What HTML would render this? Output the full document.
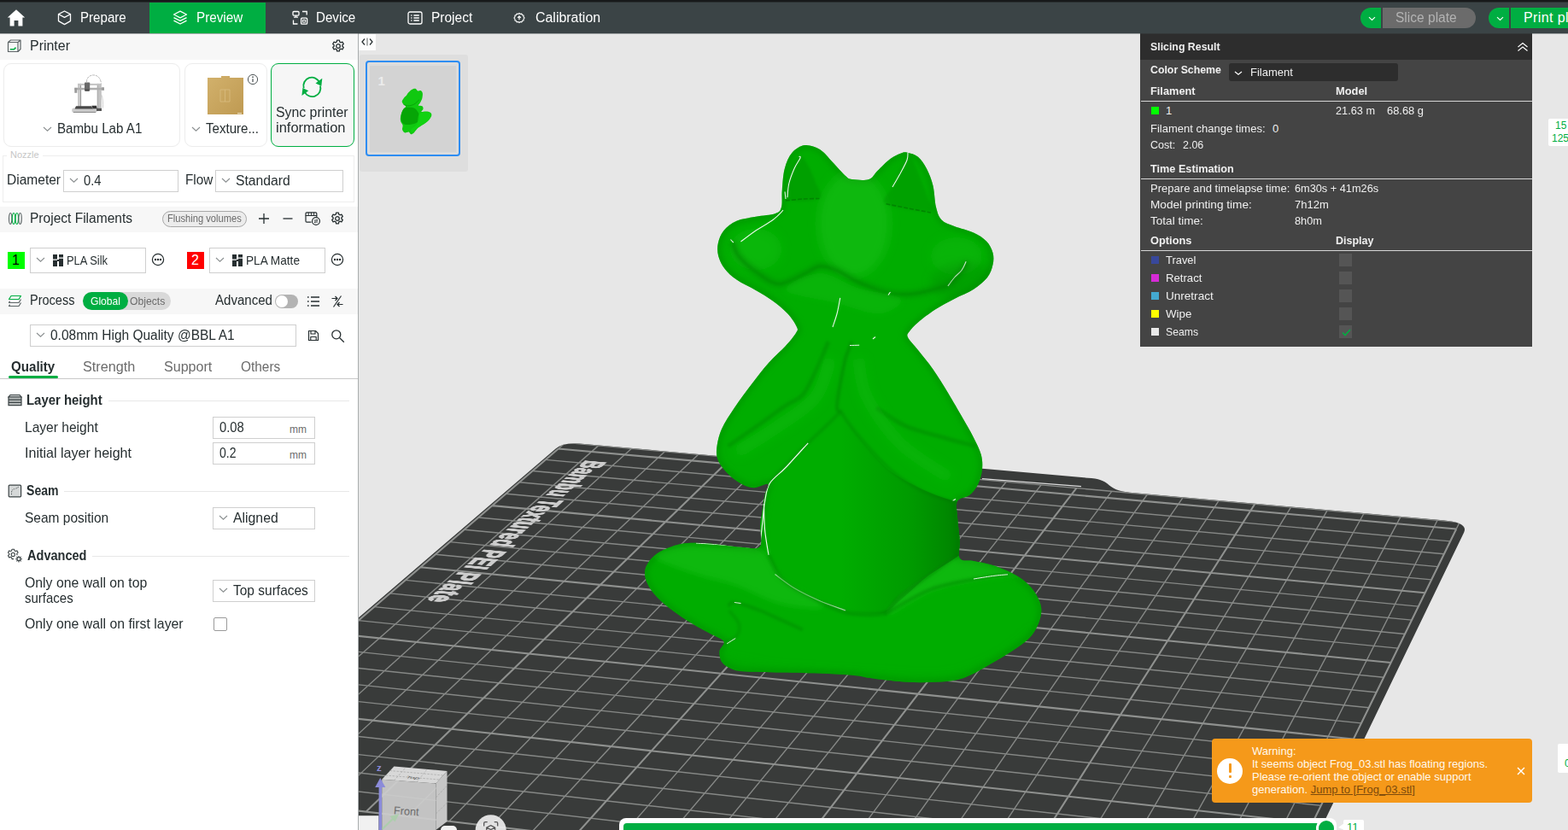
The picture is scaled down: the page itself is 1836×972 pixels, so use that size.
<!DOCTYPE html>
<html><head><meta charset="utf-8"><title>BambuStudio</title>
<style>
*{box-sizing:border-box;margin:0;padding:0}
html,body{width:1836px;height:972px;overflow:hidden;background:#fff}
body{font-family:"Liberation Sans",sans-serif;color:#262e30;position:relative;font-size:16px}
.abs{position:absolute}
.t{position:absolute;white-space:nowrap;line-height:1}
#top{position:absolute;left:0;top:0;width:1836px;height:40px;background:linear-gradient(#3b4446 0,#3b4446 39px,rgba(59,68,70,.4) 39px);z-index:5}
#top .strip{position:absolute;left:0;top:0;width:1836px;height:3px;background:linear-gradient(#17191a 0,#17191a 2px,#2a3031 2px,#2a3031 3px)}
#top .tab{position:absolute;top:3px;height:36px;color:#fff;font-size:16px}
#top .tab span{position:absolute;top:9px;white-space:nowrap;line-height:18px}
#side{position:absolute;left:0;top:39px;width:419px;height:933px;background:#fff}
#sideb{position:absolute;left:419px;top:39px;width:1px;height:933px;background:#a9adae}
.hdr{position:absolute;left:0;width:419px;background:#f7f7f7}
.box{position:absolute;border:1px solid #cfcfcf;background:#fff}
.card{position:absolute;border:1px solid #ececec;border-radius:9px;background:#fff}
#canvas{position:absolute;left:420px;top:39px;width:1416px;height:933px;background:#e7e7e7;overflow:hidden}
.g{color:#6b6b6b}
svg{overflow:visible}
.ic{position:absolute}
#sr{position:absolute;left:1335px;top:39px;width:459px;height:367px;background:#444;color:#f0f0f0;font-size:13px}
#sr .t{color:#efefef}
#sr b{font-weight:bold}
#sr .sep{position:absolute;left:1px;width:458px;height:1px;background:#d6d6d6}
#sr .sq{position:absolute;left:13px;width:9px;height:9px}
#sr .cb{position:absolute;left:233px;width:15px;height:15px;background:#555;margin-top:-1px}
</style></head><body>
<div id="top"><div class="strip"></div>
<svg class="ic" style="left:8px;top:10px" width="22" height="22" viewBox="0 0 22 22"><path d="M11 1.2 L0.8 10.6 L3.6 10.6 L3.6 20.6 L8.6 20.6 L8.6 14 L13.4 14 L13.4 20.6 L18.4 20.6 L18.4 10.6 L21.2 10.6 Z" fill="#fff"></path></svg>
<div class="tab" style="left:48px;width:127px">
<svg class="ic" style="left:19px;top:9px" width="17" height="18" viewBox="0 0 17 18" fill="none" stroke="#fff" stroke-width="1.3" stroke-linejoin="round"><path d="M8.5 1 L15.5 4.6 L15.5 12.6 L8.5 16.6 L1.5 12.6 L1.5 4.6 Z"></path><path d="M1.8 4.8 L8.5 8.4 L15.2 4.8"></path></svg>
<span style="left: 46px; transform-origin: 0px 50%; transform: scaleX(0.944);">Prepare</span></div>
<div class="tab" style="left:175px;width:136px;background:#00ae42">
<svg class="ic" style="left:27px;top:9px" width="18" height="18" viewBox="0 0 18 18" fill="none" stroke="#fff" stroke-width="1.3" stroke-linejoin="round"><path d="M9 1.2 L16.5 5 L9 8.8 L1.5 5 Z"></path><path d="M1.5 8.6 L9 12.4 L16.5 8.6"></path><path d="M1.5 12.2 L9 16 L16.5 12.2"></path></svg>
<span style="left: 55px; transform-origin: 0px 50%; transform: scaleX(0.953);">Preview</span></div>
<div class="tab" style="left:311px;width:130px">
<svg class="ic" style="left:31px;top:9px" width="19" height="18" viewBox="0 0 19 18" fill="none" stroke="#fff" stroke-width="1.3"><rect x="1" y="1.5" width="7" height="4.6" rx="1"></rect><path d="M4.5 6.1 V8.2 M2 8.2 H7"></path><path d="M12 1.5 H17.2 V5.5"></path><path d="M6.5 16 H1.5 V11.5"></path><rect x="10.6" y="9.2" width="7" height="7" rx="1"></rect><rect x="12.6" y="11.4" width="3" height="2.6" stroke-width="1"></rect></svg>
<span style="left: 59px; transform-origin: 0px 50%; transform: scaleX(0.946);">Device</span></div>
<div class="tab" style="left:441px;width:130px">
<svg class="ic" style="left:36px;top:10px" width="18" height="16" viewBox="0 0 18 16" fill="none" stroke="#fff" stroke-width="1.3"><rect x="1" y="1" width="16" height="14" rx="2"></rect><path d="M4.2 5 H5.4 M7.4 5 H13.8 M4.2 8 H5.4 M7.4 8 H13.8 M4.2 11 H5.4 M7.4 11 H13.8"></path></svg>
<span style="left: 64px; transform-origin: 0px 50%; transform: scaleX(0.968);">Project</span></div>
<div class="tab" style="left:571px;width:150px">
<svg class="ic" style="left:30px;top:11px" width="14" height="14" viewBox="0 0 16 16" fill="none" stroke="#fff" stroke-width="1.3"><path d="M8 1.6 l1.4 1.2 1.8-.4 .8 1.7 1.8 .5 -.1 1.9 1.3 1.5 -1.3 1.5 .1 1.9 -1.8 .5 -.8 1.7 -1.8 -.4 L8 14.4 l-1.4 -1.2 -1.8 .4 -.8 -1.7 -1.8 -.5 .1 -1.9 L1 8 l1.3 -1.5 -.1 -1.9 1.8 -.5 .8 -1.7 1.8 .4 Z" stroke-linejoin="round"></path><path d="M8 10.6 V5.8 M5.9 7.8 L8 5.6 L10.1 7.8" stroke-width="1.4"></path></svg>
<span style="left: 56px; transform-origin: 0px 50%; transform: scaleX(0.995);">Calibration</span></div>
<!-- slice / print buttons -->
<div class="abs" style="left:1593px;top:9px;width:24px;height:24px;background:#00ae42;border-radius:12px 0 0 12px"><svg class="ic" style="left:8.5px;top:10px" width="9" height="6" viewBox="0 0 9 6" fill="none" stroke="#fff" stroke-width="1.15"><path d="M1 1.2 L4.5 4.4 L8 1.2"></path></svg></div>
<div class="abs" style="left:1619px;top:9px;width:109px;height:24px;background:#6b6b6b;border-radius:0 12px 12px 0;color:#b3b3b3;font-size:16px"><span class="t" style="left: 15px; top: 4px; transform-origin: 0px 50%; transform: scaleX(0.971);">Slice plate</span></div>
<div class="abs" style="left:1743px;top:9px;width:24px;height:24px;background:#00ae42;border-radius:12px 0 0 12px"><svg class="ic" style="left:8.5px;top:10px" width="9" height="6" viewBox="0 0 9 6" fill="none" stroke="#fff" stroke-width="1.15"><path d="M1 1.2 L4.5 4.4 L8 1.2"></path></svg></div>
<div class="abs" style="left:1769px;top:9px;width:80px;height:24px;background:#00ae42;color:#fff;font-size:16px"><span class="t" style="left:15px;top:4px;letter-spacing:.4px">Print plate</span></div>
</div>
<div id="side"></div><div id="sideb"></div>
<!-- Printer header -->
<div class="hdr" style="top:39px;height:31px"></div>
<svg class="ic" style="left:8px;top:45px" width="18" height="18" viewBox="0 0 18 18" fill="none" stroke="#5c6466" stroke-width="1.2" stroke-linejoin="round"><path d="M1.5 4.5 H13 V15.5 H1.5 Z"></path><path d="M1.5 4.5 L4.5 2 H16 V12.5 L13 15.5 M13 4.5 L16 2"></path><path d="M3.8 12.8 H8.5 L10.5 10.6" stroke="#00ae42" stroke-width="1.6"></path></svg>
<span class="t" style="left: 35px; top: 46px; transform-origin: 0px 50%; transform: scaleX(0.997);">Printer</span>
<svg class="ic" style="left:388px;top:46px" width="16" height="16" viewBox="0 0 16 16" fill="none" stroke="#262e30" stroke-width="1.3" stroke-linejoin="round"><path d="M6.6 1.2 h2.8 l.4 1.9 1.3 .7 1.8 -.7 1.4 2.4 -1.4 1.3 v1.4 l1.4 1.3 -1.4 2.4 -1.8 -.7 -1.3 .7 -.4 1.9 h-2.8 l-.4 -1.9 -1.3 -.7 -1.8 .7 -1.4 -2.4 1.4 -1.3 v-1.4 l-1.4 -1.3 1.4 -2.4 1.8 .7 1.3 -.7 Z"></path><circle cx="8" cy="8" r="2.3"></circle></svg>
<!-- cards -->
<div class="card" style="left:4px;top:74px;width:207px;height:98px"></div>
<div class="card" style="left:216px;top:74px;width:97px;height:98px"></div>
<div class="card" style="left:317px;top:74px;width:98px;height:98px;border:1.4px solid #00ae42;background:#f6f6f6"></div>
<!-- printer illustration -->
<svg class="ic" style="left:82px;top:85px" width="42" height="50" viewBox="0 0 42 50" fill="none">
<path d="M19.500 11 C19 1 35 -1 36.500 12.500" stroke="#9a9a9a" stroke-width=".7" stroke-dasharray="3 .8"></path>
<path d="M36.800 26 C38.500 30 38.800 36 38.400 41.500" stroke="#b0b0b0" stroke-width=".6"></path>
<rect x="9" y="12.900" width="4" height="27.500" fill="#c9c9c9"></rect><rect x="12.200" y="12.900" width=".9" height="27.500" fill="#8e8e8e"></rect>
<rect x="31.800" y="12.900" width="5" height="31.500" fill="#c2c2c2"></rect><rect x="31.800" y="12.900" width=".8" height="31.500" fill="#a2a2a2"></rect>
<rect x="9" y="12.900" width="27.800" height="2" fill="#c4c4c4"></rect>
<rect x="5.300" y="17.800" width="34.600" height="2.500" fill="#aeaeae"></rect><rect x="5.300" y="17.800" width="3" height="6" fill="#9a9a9a"></rect><rect x="37" y="17.300" width="3" height="3.500" fill="#9c9c9c"></rect>
<rect x="17" y="11.500" width="6.200" height="10" rx=".8" fill="#6a6a6a"></rect><rect x="17.500" y="19.500" width="5" height="2.200" fill="#4a4a4a"></rect>
<rect x="2.200" y="41.600" width="29.500" height="5.300" rx="2.200" fill="#cbcbcb"></rect><rect x="4" y="45.900" width="26" height="1.100" fill="#8c8c8c"></rect>
<path d="M7 39.300 H25 L27 42.600 H5.500 Z" fill="#474747"></path>
<path d="M25.300 38.800 H31 L31.600 42.200 H26.800 Z" fill="#333"></path>
<rect x="31" y="41.800" width="6" height="3.200" fill="#555"></rect>
</svg>
<svg class="ic" style="left:50px;top:148px" width="11" height="7" viewBox="0 0 11 7" fill="none" stroke="#8a8f90" stroke-width="1.1"><path d="M1 1 L5.5 5.2 L10 1"></path></svg>
<span class="t" style="left: 67px; top: 143px; transform-origin: 0px 50%; transform: scaleX(0.946);">Bambu Lab A1</span>
<!-- plate image -->
<svg class="ic" style="left:242px;top:88px" width="44" height="48" viewBox="0 0 44 48"><defs><linearGradient id="gold" x1="0" y1="0" x2="1" y2="1"><stop offset="0" stop-color="#d2b16c"></stop><stop offset="1" stop-color="#bf9a52"></stop></linearGradient></defs><path d="M1 3 H17 V1 H27 V3 H43 V46 H1 Z" fill="url(#gold)"></path><path d="M16 17 H27 V31 H16 Z M21.5 17 V31" fill="none" stroke="#d9bd80" stroke-width=".8"></path><rect x="36" y="44.3" width="5" height="1" fill="#f3ead2"></rect></svg>
<svg class="ic" style="left:289px;top:86px" width="14" height="14" viewBox="0 0 14 14" fill="none" stroke="#4f5658" stroke-width="1"><circle cx="7" cy="7" r="5.6"></circle><path d="M7 6.2 V10" stroke-width="1.3"></path><circle cx="7" cy="4.2" r=".5" fill="#4f5658"></circle></svg>
<svg class="ic" style="left:224px;top:148px" width="11" height="7" viewBox="0 0 11 7" fill="none" stroke="#8a8f90" stroke-width="1.1"><path d="M1 1 L5.5 5.2 L10 1"></path></svg>
<span class="t" style="left: 241px; top: 143px; transform-origin: 0px 50%; transform: scaleX(0.942);">Texture...</span>
<!-- sync -->
<svg class="ic" style="left:350px;top:88px" width="32" height="28" viewBox="0 0 32 28" fill="none" stroke="#00ae42" stroke-width="1.9"><path d="M5.7 15.2 A9.8 9.8 0 0 1 24.2 8.8"></path><path d="M25 12.600 A9.8 9.800 0 0 1 6.5 19"></path><path d="M19.500 9.500 L27.300 3.800 L26.300 12.700 Z" fill="#00ae42" stroke="none"></path><path d="M11.200 18.300 L3.400 24 L4.400 15.100 Z" fill="#00ae42" stroke="none"></path></svg>
<span class="t" style="left: 323px; top: 124px; transform-origin: 0px 50%; transform: scaleX(0.99);">Sync printer</span>
<span class="t" style="left: 323px; top: 142px; transform-origin: 0px 50%; transform: scaleX(1.03);">information</span>
<!-- nozzle -->
<div class="abs" style="left:3px;top:182px;width:412px;height:55px;border:1px solid #eeeeee"></div>
<span class="t" style="left:8px;top:176px;font-size:11px;color:#c6c6c6;background:#fff;padding:0 4px">Nozzle</span>
<span class="t" style="left: 8px; top: 203px; transform-origin: 0px 50%; transform: scaleX(0.971);">Diameter</span>
<div class="box" style="left:74px;top:199px;width:135px;height:26px"></div>
<svg class="ic" style="left:81px;top:208px" width="11" height="7" viewBox="0 0 11 7" fill="none" stroke="#8a8f90" stroke-width="1.1"><path d="M1 1 L5.5 5.2 L10 1"></path></svg>
<span class="t" style="left: 98px; top: 204px; transform-origin: 0px 50%; transform: scaleX(0.921);">0.4</span>
<span class="t" style="left: 217px; top: 203px; transform-origin: 0px 50%; transform: scaleX(0.955);">Flow</span>
<div class="box" style="left:252px;top:199px;width:150px;height:26px"></div>
<svg class="ic" style="left:259px;top:208px" width="11" height="7" viewBox="0 0 11 7" fill="none" stroke="#8a8f90" stroke-width="1.1"><path d="M1 1 L5.5 5.2 L10 1"></path></svg>
<span class="t" style="left: 276px; top: 204px; transform-origin: 0px 50%; transform: scaleX(0.982);">Standard</span>
<!-- Project Filaments -->
<div class="hdr" style="top:242px;height:30px"></div>
<svg class="ic" style="left:9px;top:248px" width="18" height="16" viewBox="0 0 18 16" fill="none" stroke-width="1.1"><ellipse cx="3.2" cy="8" rx="1.7" ry="6.5" stroke="#5c6466"></ellipse><ellipse cx="7" cy="8" rx="1.7" ry="6.5" stroke="#00ae42"></ellipse><ellipse cx="10.8" cy="8" rx="1.7" ry="6.5" stroke="#00ae42"></ellipse><ellipse cx="14.6" cy="8" rx="1.7" ry="6.5" stroke="#5c6466"></ellipse></svg>
<span class="t" style="left: 35px; top: 248px; transform-origin: 0px 50%; transform: scaleX(0.971);">Project Filaments</span>
<div class="abs" style="left:190px;top:247px;width:99px;height:19px;border:1px solid #a8a8a8;border-radius:10px;background:#ececec"></div>
<span class="t g" style="left: 196px; top: 250px; font-size: 12px; transform-origin: 0px 50%; transform: scaleX(0.929);">Flushing volumes</span>
<svg class="ic" style="left:302px;top:249px" width="14" height="14" viewBox="0 0 14 14" stroke="#262e30" stroke-width="1.3"><path d="M7 1 V13 M1 7 H13"></path></svg>
<svg class="ic" style="left:330px;top:249px" width="14" height="14" viewBox="0 0 14 14" stroke="#262e30" stroke-width="1.3"><path d="M1.5 7 H12.5"></path></svg>
<svg class="ic" style="left:356px;top:247px" width="20" height="18" viewBox="0 0 20 18" fill="none" stroke="#262e30" stroke-width="1.2"><path d="M2 5.5 V3 Q2 1.8 3.2 1.8 H13.6 Q14.8 1.8 14.8 3 V5.5 Z"></path><path d="M5.2 2 V5.3 M8.4 2 V5.3 M11.6 2 V5.3" stroke-width="1"></path><path d="M2 5.5 V12 Q2 13.2 3.2 13.2 H8.5 M14.8 5.5 V7"></path><circle cx="14" cy="12" r="4.4" fill="#fff"></circle><path d="M11.8 11 H16 M14.8 9.8 L16 11 M16.2 13 H12 M13.2 14.2 L12 13" stroke-width="1"></path></svg>
<svg class="ic" style="left:387px;top:248px" width="16" height="16" viewBox="0 0 16 16" fill="none" stroke="#262e30" stroke-width="1.3" stroke-linejoin="round"><path d="M6.6 1.2 h2.8 l.4 1.9 1.3 .7 1.8 -.7 1.4 2.4 -1.4 1.3 v1.4 l1.4 1.3 -1.4 2.4 -1.8 -.7 -1.3 .7 -.4 1.9 h-2.8 l-.4 -1.9 -1.3 -.7 -1.8 .7 -1.4 -2.4 1.4 -1.3 v-1.4 l-1.4 -1.3 1.4 -2.4 1.8 .7 1.3 -.7 Z"></path><circle cx="8" cy="8" r="2.3"></circle></svg>
<!-- filament row -->
<div class="abs" style="left:9px;top:295px;width:20px;height:20px;background:#00ff00"></div>
<span class="t" style="left:14px;top:297px;color:#000">1</span>
<div class="box" style="left:35px;top:290px;width:136px;height:30px"></div>
<svg class="ic" style="left:42px;top:301px" width="11" height="7" viewBox="0 0 11 7" fill="none" stroke="#8a8f90" stroke-width="1.1"><path d="M1 1 L5.5 5.2 L10 1"></path></svg>
<svg class="ic" style="left:62px;top:298px" width="12" height="14" viewBox="0 0 12 14" fill="#262e30"><path d="M0 0 H5 V5.5 H0 Z M7 0 H12 V3.5 H7 Z M7 4.8 H12 V14 H7 Z M0 6.8 H5 V14 H0 Z M5 6 H7 V8 H5Z"></path></svg>
<span class="t" style="left: 78px; top: 296.5px; font-size: 15px; transform-origin: 0px 50%; transform: scaleX(0.86);">PLA Silk</span>
<svg class="ic" style="left:177px;top:296px" width="16" height="16" viewBox="0 0 16 16" fill="none" stroke="#262e30" stroke-width="1.2"><circle cx="8" cy="8" r="6.6"></circle><circle cx="5" cy="8" r=".6" fill="#262e30"></circle><circle cx="8" cy="8" r=".6" fill="#262e30"></circle><circle cx="11" cy="8" r=".6" fill="#262e30"></circle></svg>
<div class="abs" style="left:219px;top:295px;width:20px;height:20px;background:#ff0000"></div>
<span class="t" style="left:224px;top:297px;color:#fff">2</span>
<div class="box" style="left:245px;top:290px;width:136px;height:30px"></div>
<svg class="ic" style="left:252px;top:301px" width="11" height="7" viewBox="0 0 11 7" fill="none" stroke="#8a8f90" stroke-width="1.1"><path d="M1 1 L5.5 5.2 L10 1"></path></svg>
<svg class="ic" style="left:272px;top:298px" width="12" height="14" viewBox="0 0 12 14" fill="#262e30"><path d="M0 0 H5 V5.5 H0 Z M7 0 H12 V3.5 H7 Z M7 4.8 H12 V14 H7 Z M0 6.8 H5 V14 H0 Z M5 6 H7 V8 H5Z"></path></svg>
<span class="t" style="left: 288px; top: 296.5px; font-size: 15px; transform-origin: 0px 50%; transform: scaleX(0.91);">PLA Matte</span>
<svg class="ic" style="left:387px;top:296px" width="16" height="16" viewBox="0 0 16 16" fill="none" stroke="#262e30" stroke-width="1.2"><circle cx="8" cy="8" r="6.6"></circle><circle cx="5" cy="8" r=".6" fill="#262e30"></circle><circle cx="8" cy="8" r=".6" fill="#262e30"></circle><circle cx="11" cy="8" r=".6" fill="#262e30"></circle></svg>
<!-- Process -->
<div class="hdr" style="top:338px;height:30px"></div>
<svg class="ic" style="left:9px;top:345px" width="17" height="16" viewBox="0 0 17 16" fill="none" stroke-width="1.2" stroke-linejoin="round"><path d="M4 1.5 H15.5 L13 5.5 H1.5 Z" stroke="#00ae42"></path><path d="M15.5 5.5 L13 9.5 H1.5 L2.6 7.6" stroke="#5c6466"></path><path d="M15.5 9.5 L13 13.5 H1.5 L2.6 11.6" stroke="#5c6466"></path></svg>
<span class="t" style="left: 35px; top: 344px; transform-origin: 0px 50%; transform: scaleX(0.908);">Process</span>
<div class="abs" style="left:97px;top:342px;width:103px;height:21px;border-radius:11px;background:#d9d9d9"></div>
<div class="abs" style="left:97px;top:342px;width:53px;height:21px;border-radius:11px;background:#00ae42"></div>
<span class="t" style="left: 106px; top: 346px; font-size: 13px; color: rgb(255, 255, 255); transform-origin: 0px 50%; transform: scaleX(0.931);">Global</span>
<span class="t" style="left: 152px; top: 346px; font-size: 13px; color: rgb(107, 107, 107); transform-origin: 0px 50%; transform: scaleX(0.936);">Objects</span>
<span class="t" style="left: 252px; top: 344px; transform-origin: 0px 50%; transform: scaleX(0.941);">Advanced</span>
<div class="abs" style="left:322px;top:345px;width:27px;height:16px;border-radius:8px;background:#b3b3b3"></div>
<div class="abs" style="left:323px;top:346px;width:14px;height:14px;border-radius:7px;background:#fff"></div>
<svg class="ic" style="left:359px;top:346px" width="16" height="14" viewBox="0 0 16 14" stroke="#262e30" stroke-width="1.3"><path d="M1 2 H2.6 M5 2 H15 M1 7 H2.6 M5 7 H15 M1 12 H2.6 M5 12 H15"></path></svg>
<svg class="ic" style="left:387px;top:345px" width="16" height="16" viewBox="0 0 16 16" fill="none" stroke="#262e30" stroke-width="1.2"><path d="M1.5 4.5 H8 M5.5 2 L8 4.5 L5.5 7"></path><path d="M12.5 1.5 L3.5 14.5"></path><path d="M14.5 11.5 H8 M10.5 9 L8 11.5 L10.5 14"></path></svg>
<div class="box" style="left:35px;top:380px;width:312px;height:26px"></div>
<svg class="ic" style="left:42px;top:389px" width="11" height="7" viewBox="0 0 11 7" fill="none" stroke="#8a8f90" stroke-width="1.1"><path d="M1 1 L5.5 5.2 L10 1"></path></svg>
<span class="t" style="left: 59px; top: 385px; transform-origin: 0px 50%; transform: scaleX(0.968);">0.08mm High Quality @BBL A1</span>
<svg class="ic" style="left:360px;top:386px" width="14" height="14" viewBox="0 0 14 14" fill="none" stroke="#262e30" stroke-width="1.2" stroke-linejoin="round"><path d="M1.5 1.5 H9.5 L12.5 4.5 V12.5 H1.5 Z"></path><path d="M4 1.8 V5 H9 V1.8 M3.8 12.3 V8.5 H10.2 V12.3"></path></svg>
<svg class="ic" style="left:387px;top:385px" width="17" height="17" viewBox="0 0 17 17" fill="none" stroke="#262e30" stroke-width="1.3"><circle cx="6.8" cy="6.8" r="5"></circle><path d="M10.5 10.5 L15.8 15.8"></path></svg>
<!-- tabs -->
<span class="t" style="left: 13px; top: 421.5px; font-weight: bold; transform-origin: 0px 50%; transform: scaleX(0.945);">Quality</span>
<span class="t" style="left: 97px; top: 421.5px; color: rgb(107, 107, 107); transform-origin: 0px 50%; transform: scaleX(1.013);">Strength</span>
<span class="t" style="left: 192px; top: 421.5px; color: rgb(107, 107, 107); transform-origin: 0px 50%; transform: scaleX(1.004);">Support</span>
<span class="t" style="left: 282px; top: 421.5px; color: rgb(107, 107, 107); transform-origin: 0px 50%; transform: scaleX(0.963);">Others</span>
<div class="abs" style="left:0;top:443px;width:419px;height:1px;background:#c8c8c8"></div>
<div class="abs" style="left:10px;top:440px;width:58px;height:3px;border-radius:2px;background:#00ae42"></div>
<!-- Quality page -->
<svg class="ic" style="left:9px;top:461px" width="17" height="16" viewBox="0 0 17 16" fill="none" stroke="#3c4446" stroke-width="1.2"><path d="M3 1.5 H14 L16 4 H1 Z" fill="#d5d8d8"></path><path d="M1 4 H16 V7.2 H1 Z M1 7.2 H16 V10.4 H1 Z M1 10.4 H16 V13.6 H1 Z" fill="#b9bdbd"></path></svg>
<span class="t" style="left: 31px; top: 461px; font-weight: bold; font-size: 15.7px; transform-origin: 0px 50%; transform: scaleX(0.951);">Layer height</span>
<div class="abs" style="left:127px;top:469px;width:282px;height:1px;background:#e8e8e8"></div>
<span class="t" style="left: 29px; top: 493px; font-size: 15.7px; transform-origin: 0px 50%; transform: scaleX(0.993);">Layer height</span>
<div class="box" style="left:249px;top:488px;width:120px;height:26px"></div>
<span class="t" style="left: 257px; top: 493px; font-size: 15.7px; transform-origin: 0px 50%; transform: scaleX(0.941);">0.08</span>
<span class="t g" style="left: 339px; top: 497px; font-size: 12px; transform-origin: 0px 50%; transform: scaleX(1);">mm</span>
<span class="t" style="left: 29px; top: 523px; font-size: 15.7px; transform-origin: 0px 50%; transform: scaleX(1.024);">Initial layer height</span>
<div class="box" style="left:249px;top:518px;width:120px;height:26px"></div>
<span class="t" style="left: 257px; top: 523px; font-size: 15.7px; transform-origin: 0px 50%; transform: scaleX(0.894);">0.2</span>
<span class="t g" style="left: 339px; top: 527px; font-size: 12px; transform-origin: 0px 50%; transform: scaleX(1);">mm</span>

<svg class="ic" style="left:9px;top:567px" width="17" height="16" viewBox="0 0 17 16" fill="none" stroke="#3c4446" stroke-width="1.2"><rect x="1.2" y="1.2" width="14.4" height="13.6" rx="1" fill="#d5d8d8"></rect><path d="M4.5 12 V11 M4.5 9.5 Q5 6 8 5.6 M9.5 5.2 L12.5 3.5" stroke-width="1" stroke-dasharray="1.2 1.2"></path></svg>
<span class="t" style="left: 31px; top: 567px; font-weight: bold; font-size: 15.7px; transform-origin: 0px 50%; transform: scaleX(0.896);">Seam</span>
<div class="abs" style="left:75px;top:575px;width:334px;height:1px;background:#e8e8e8"></div>
<span class="t" style="left: 29px; top: 599px; font-size: 15.7px; transform-origin: 0px 50%; transform: scaleX(0.988);">Seam position</span>
<div class="box" style="left:249px;top:594px;width:120px;height:26px"></div>
<svg class="ic" style="left:256px;top:603px" width="11" height="7" viewBox="0 0 11 7" fill="none" stroke="#8a8f90" stroke-width="1.1"><path d="M1 1 L5.5 5.2 L10 1"></path></svg>
<span class="t" style="left: 273px; top: 599px; font-size: 15.7px; transform-origin: 0px 50%; transform: scaleX(1.008);">Aligned</span>

<svg class="ic" style="left:8px;top:642px" width="20" height="18" viewBox="0 0 20 18" fill="none" stroke="#3c4446" stroke-width="1.1" stroke-linejoin="round"><path d="M6 1.2 h2.6 l.4 1.7 1.2 .6 1.6 -.6 1.3 2.2 -1.3 1.2 v1.2 l.6 .6 M6 1.2 l-.4 1.7 -1.2 .6 -1.6 -.6 -1.3 2.2 1.3 1.2 v1.2 l-1.3 1.2 1.3 2.2 1.6 -.6 1.2 .6 .4 1.7 h2"></path><circle cx="7.3" cy="7.4" r="2.1"></circle><circle cx="14" cy="12.6" r="2"></circle><path d="M14 9 v1.4 M14 14.8 v1.6 M10.4 12.6 h1.5 M16.2 12.6 h1.6 M11.5 10 l1 1 M15.6 14.2 l1.1 1.1 M16.6 10 l-1 1 M12.5 14.2 l-1.1 1.1"></path></svg>
<span class="t" style="left: 32px; top: 643px; font-weight: bold; font-size: 15.7px; transform-origin: 0px 50%; transform: scaleX(0.927);">Advanced</span>
<div class="abs" style="left:108px;top:651px;width:301px;height:1px;background:#e8e8e8"></div>
<span class="t" style="left: 29px; top: 675px; font-size: 15.7px; transform-origin: 0px 50%; transform: scaleX(1.008);">Only one wall on top</span>
<span class="t" style="left: 29px; top: 693px; font-size: 15.7px; transform-origin: 0px 50%; transform: scaleX(0.955);">surfaces</span>
<div class="box" style="left:249px;top:679px;width:120px;height:26px"></div>
<svg class="ic" style="left:256px;top:688px" width="11" height="7" viewBox="0 0 11 7" fill="none" stroke="#8a8f90" stroke-width="1.1"><path d="M1 1 L5.5 5.2 L10 1"></path></svg>
<span class="t" style="left: 273px; top: 684px; font-size: 15.7px; transform-origin: 0px 50%; transform: scaleX(0.988);">Top surfaces</span>
<span class="t" style="left: 29px; top: 723px; font-size: 15.7px; transform-origin: 0px 50%; transform: scaleX(1.009);">Only one wall on first layer</span>
<div class="abs" style="left:250px;top:723px;width:16px;height:16px;border:1px solid #9a9a9a;border-radius:2px;background:#fff"></div>
<div id="canvas">
<svg id="scene" width="1416" height="932" viewBox="420 40 1416 932" style="position:absolute;left:0;top:1px">
<defs>
<clipPath id="pc"><path d="M187.3 922.7 L650.6 525.4 Q659.5 517.8 678.7 519.5 L1056.7 553.1 L1079.2 542.6 L1278 560.1 C1302.7 562.3 1293.8 574.1 1322.9 576.7 L1689.3 609.3 Q1719.7 612 1714.2 623.4 L1496.5 1074.2 L420 1200Z"></path></clipPath>
<clipPath id="fc"><path d="M942.5 170C947.9 169.4 954.6 171.7 960 175C965.4 178.3 970 184.8 975 190C980 195.2 986.2 202.7 990 206C993.8 209.3 992.9 209.3 997.5 210C1002.1 210.7 1012.5 211.7 1017.5 210C1022.5 208.3 1023.3 204 1027.5 200C1031.7 196 1037.9 189.4 1042.5 186C1047.1 182.6 1051.7 180.7 1055 179.5C1058.3 178.3 1059.2 178 1062.5 178.8C1065.8 179.5 1071.2 180.6 1075 183.8C1078.8 186.9 1082.1 191.9 1085 197.5C1087.9 203.1 1090.7 210 1092.5 217.5C1094.3 225 1094.3 235.8 1096 242.5C1097.7 249.2 1098.9 253.8 1102.5 257.5C1106.1 261.2 1111.2 262.5 1117.5 265C1123.8 267.5 1133.8 269.6 1140 272.5C1146.2 275.4 1151.2 278.6 1155 282.5C1158.8 286.4 1161.2 291.4 1162.5 296C1163.8 300.6 1163.6 305.2 1162.5 310C1161.4 314.8 1159.8 320.2 1156 325C1152.2 329.8 1146.4 334.6 1140 338.8C1133.6 342.9 1125 346 1117.5 350C1110 354 1102.1 357.9 1095 362.5C1087.9 367.1 1080 373.2 1075 377.5C1070 381.8 1067 385.1 1065 388C1063 390.9 1061.3 391.3 1063 395C1064.7 398.7 1070.1 403.8 1075 410C1079.9 416.2 1086.7 424.2 1092.5 432.5C1098.3 440.8 1104.2 450.4 1110 460C1115.8 469.6 1122.5 481.2 1127.5 490C1132.5 498.8 1136.5 505.4 1140 512.5C1143.5 519.6 1147.1 526.2 1148.8 532.5C1150.4 538.8 1150.6 544.2 1150 550C1149.4 555.8 1147.5 562.5 1145 567.5C1142.5 572.5 1139 576.8 1135 580C1131 583.2 1123.3 582.4 1121 587C1118.7 591.6 1120.8 599.8 1121.2 607.5C1121.7 615.2 1123.3 625.2 1123.8 633C1124.2 640.8 1121.3 650 1124 654C1126.7 658 1134 655.8 1140 657C1146 658.2 1153.3 659.3 1160 661.2C1166.7 663.2 1173.8 665.8 1180 668.8C1186.2 671.7 1192.5 675 1197.5 678.8C1202.5 682.5 1206.7 686.9 1210 691.2C1213.3 695.6 1216 700.6 1217.5 705C1219 709.4 1219.7 712.9 1219.2 717.5C1218.8 722.1 1217.4 727.5 1215 732.5C1212.6 737.5 1210 742.5 1205 747.5C1200 752.5 1192.5 757.5 1185 762.5C1177.5 767.5 1167.9 772.9 1160 777.5C1152.1 782.1 1144.2 786.9 1137.5 790C1130.8 793.1 1127.1 794.8 1120 796.2C1112.9 797.7 1104.6 798.3 1095 798.8C1085.4 799.2 1074.2 799.4 1062.5 798.8C1050.8 798.1 1035.4 796.3 1025 795C1014.6 793.7 1010 792 1000 791C990 790 979.2 789.3 965 788.8C950.8 788.2 930.8 787.9 915 787.5C899.2 787.1 880 787.1 870 786.2C860 785.4 859.2 784.4 855 782.5C850.8 780.6 847.1 778.3 845 775C842.9 771.7 842.1 766.5 842.5 762.5C842.9 758.5 849.2 754.6 847.5 751.2C845.8 747.9 838.8 746 832.5 742.5C826.2 739 817.5 734.6 810 730C802.5 725.4 794.2 720 787.5 715C780.8 710 774.8 705 770 700C765.2 695 761.2 690 758.8 685C756.2 680 754.8 674.6 755 670C755.2 665.4 757.1 661.5 760 657.5C762.9 653.5 766.7 649.6 772.5 646.2C778.3 642.9 787.9 639.2 795 637.5C802.1 635.8 807.5 635.8 815 635.8C822.5 635.8 830.8 636.6 840 637.5C849.2 638.4 861.7 640.6 870 641C878.3 641.4 886.7 644.3 890 640C893.3 635.7 889.7 621.2 890 615C890.3 608.8 891.1 608.3 892 602.5C892.9 596.7 894.3 585.9 895.5 580C896.7 574.1 901.2 568.5 899 567C896.8 565.5 887.8 571.4 882.5 571.2C877.2 571.1 872.5 569 867.5 566.2C862.5 563.5 856.9 559.4 852.5 555C848.1 550.6 843.5 545 841.2 540C839 535 838.6 531.2 839.2 525C839.9 518.8 841.5 510.4 845 502.5C848.5 494.6 854.2 486.2 860 477.5C865.8 468.8 873.3 458.8 880 450C886.7 441.2 893.3 432.5 900 425C906.7 417.5 914.7 410.8 920 405C925.3 399.2 929.8 393.7 932 390C934.2 386.3 934.6 386.8 933 383C931.4 379.2 927.2 372.6 922.5 367.5C917.8 362.4 911.2 357.1 905 352.5C898.8 347.9 892.1 344.2 885 340C877.9 335.8 868.5 331.7 862.5 327.5C856.5 323.3 852.3 319.6 848.8 315C845.2 310.4 842.6 305 841.2 300C839.9 295 839.7 290 840.8 285C841.8 280 843.9 274.4 847.5 270C851.1 265.6 856.2 261.5 862.5 258.8C868.8 256 877.4 255.2 885 253.8C892.6 252.3 903 251.9 908 250C913 248.1 913.7 247.1 915 242.5C916.3 237.9 915.1 230 915.8 222.5C916.4 215 916.8 204.8 918.8 197.5C920.7 190.2 923.5 183.3 927.5 178.8C931.5 174.2 937.1 170.6 942.5 170Z"></path></clipPath>
<linearGradient id="tg" gradientUnits="userSpaceOnUse" x1="985" y1="0" x2="1128" y2="0"><stop offset="0" stop-color="#006e00" stop-opacity="0"></stop><stop offset=".55" stop-color="#006e00" stop-opacity=".28"></stop><stop offset="1" stop-color="#006000" stop-opacity=".6"></stop></linearGradient>
<filter id="b6" x="-20%" y="-20%" width="140%" height="140%"><feGaussianBlur stdDeviation="6"></feGaussianBlur></filter>
<filter id="b2" x="-20%" y="-20%" width="140%" height="140%"><feGaussianBlur stdDeviation="1.6"></feGaussianBlur></filter>
<filter id="b3" x="-20%" y="-20%" width="140%" height="140%"><feGaussianBlur stdDeviation="3"></feGaussianBlur></filter>
</defs>
<path d="M187.3 922.7 L650.6 525.4 Q659.5 517.8 678.7 519.5 L1056.7 553.1 L1079.2 542.6 L1278 560.1 C1302.7 562.3 1293.8 574.1 1322.9 576.7 L1689.3 609.3 Q1719.7 612 1714.2 623.4 L1496.5 1074.2 L420 1200Z" fill="#393b3a"></path>
<g clip-path="url(#pc)" fill="none" stroke="#8f918f">
<path d="M662.1 518.4L653.8 525.5M700.7 521.9L238.1 928.6M739.5 525.3L285.3 934.1M778.5 528.8L332.8 939.5M817.7 532.2L380.6 945.1M896.5 539.3L477 956.2M936.2 542.8L525.6 961.9M976.1 546.3L574.5 967.5M1016.1 549.9L623.7 973.2M1096.8 557.1L722.9 984.7M1137.4 560.7L772.9 990.5M1178.2 564.3L823.2 996.3M1219.2 567.9L873.9 1002.1M1301.8 575.3L976 1014M1343.4 579L1027.5 1019.9M1385.1 582.7L1079.3 1025.9M1427.1 586.4L1131.5 1031.9M1511.6 593.9L1236.7 1044.1M1554.2 597.7L1289.7 1050.3M1596.9 601.5L1343.1 1056.4M1639.9 605.3L1396.9 1062.6M1683.1 609.2L1450.9 1068.9M1709.1 611.5L1705.2 619.5M662.1 518.4L1709.1 611.5M638.8 538.4L1698.1 633.9M623.6 551.5L1690.9 648.7M608.1 564.8L1683.6 663.6M592.4 578.3L1676.1 678.9M560.1 606L1660.8 710.1M543.6 620.2L1653 726.1M526.8 634.6L1645 742.5M509.8 649.3L1636.9 759.1M474.7 679.4L1620.2 793.2M456.7 694.9L1611.6 810.8M438.4 710.6L1602.8 828.7M419.8 726.6L1593.9 846.9M381.6 759.4L1575.6 884.4M362 776.3L1566.1 903.7M342 793.5L1556.5 923.4M321.6 811L1546.7 943.4M279.7 847L1526.5 984.8M258.2 865.5L1516.1 1006.1M236.3 884.3L1505.4 1027.8M213.9 903.5L1494.6 1050" stroke-width="1.4" stroke-opacity=".9"></path>
<path d="M653.8 525.5L191.1 923.1M857 535.7L428.7 950.6M1056.4 553.5L673.1 978.9M1260.4 571.6L924.8 1008M1469.3 590.2L1183.9 1038M1705.2 619.5L1483.5 1072.7M653.8 525.5L1705.2 619.5M576.4 592.1L1668.5 694.3M492.4 664.2L1628.6 776M400.9 742.9L1584.8 865.5M300.9 828.8L1536.7 963.9M191.1 923.1L1483.5 1072.7" stroke-width="2.1"></path>
</g>
<path d="M1150 560.7 L1266 569.7" stroke="#dcdcdc" stroke-width="1.3"></path>
<path d="M942.5 170C947.9 169.4 954.6 171.7 960 175C965.4 178.3 970 184.8 975 190C980 195.2 986.2 202.7 990 206C993.8 209.3 992.9 209.3 997.5 210C1002.1 210.7 1012.5 211.7 1017.5 210C1022.5 208.3 1023.3 204 1027.5 200C1031.7 196 1037.9 189.4 1042.5 186C1047.1 182.6 1051.7 180.7 1055 179.5C1058.3 178.3 1059.2 178 1062.5 178.8C1065.8 179.5 1071.2 180.6 1075 183.8C1078.8 186.9 1082.1 191.9 1085 197.5C1087.9 203.1 1090.7 210 1092.5 217.5C1094.3 225 1094.3 235.8 1096 242.5C1097.7 249.2 1098.9 253.8 1102.5 257.5C1106.1 261.2 1111.2 262.5 1117.5 265C1123.8 267.5 1133.8 269.6 1140 272.5C1146.2 275.4 1151.2 278.6 1155 282.5C1158.8 286.4 1161.2 291.4 1162.5 296C1163.8 300.6 1163.6 305.2 1162.5 310C1161.4 314.8 1159.8 320.2 1156 325C1152.2 329.8 1146.4 334.6 1140 338.8C1133.6 342.9 1125 346 1117.5 350C1110 354 1102.1 357.9 1095 362.5C1087.9 367.1 1080 373.2 1075 377.5C1070 381.8 1067 385.1 1065 388C1063 390.9 1061.3 391.3 1063 395C1064.7 398.7 1070.1 403.8 1075 410C1079.9 416.2 1086.7 424.2 1092.5 432.5C1098.3 440.8 1104.2 450.4 1110 460C1115.8 469.6 1122.5 481.2 1127.5 490C1132.5 498.8 1136.5 505.4 1140 512.5C1143.5 519.6 1147.1 526.2 1148.8 532.5C1150.4 538.8 1150.6 544.2 1150 550C1149.4 555.8 1147.5 562.5 1145 567.5C1142.5 572.5 1139 576.8 1135 580C1131 583.2 1123.3 582.4 1121 587C1118.7 591.6 1120.8 599.8 1121.2 607.5C1121.7 615.2 1123.3 625.2 1123.8 633C1124.2 640.8 1121.3 650 1124 654C1126.7 658 1134 655.8 1140 657C1146 658.2 1153.3 659.3 1160 661.2C1166.7 663.2 1173.8 665.8 1180 668.8C1186.2 671.7 1192.5 675 1197.5 678.8C1202.5 682.5 1206.7 686.9 1210 691.2C1213.3 695.6 1216 700.6 1217.5 705C1219 709.4 1219.7 712.9 1219.2 717.5C1218.8 722.1 1217.4 727.5 1215 732.5C1212.6 737.5 1210 742.5 1205 747.5C1200 752.5 1192.5 757.5 1185 762.5C1177.5 767.5 1167.9 772.9 1160 777.5C1152.1 782.1 1144.2 786.9 1137.5 790C1130.8 793.1 1127.1 794.8 1120 796.2C1112.9 797.7 1104.6 798.3 1095 798.8C1085.4 799.2 1074.2 799.4 1062.5 798.8C1050.8 798.1 1035.4 796.3 1025 795C1014.6 793.7 1010 792 1000 791C990 790 979.2 789.3 965 788.8C950.8 788.2 930.8 787.9 915 787.5C899.2 787.1 880 787.1 870 786.2C860 785.4 859.2 784.4 855 782.5C850.8 780.6 847.1 778.3 845 775C842.9 771.7 842.1 766.5 842.5 762.5C842.9 758.5 849.2 754.6 847.5 751.2C845.8 747.9 838.8 746 832.5 742.5C826.2 739 817.5 734.6 810 730C802.5 725.4 794.2 720 787.5 715C780.8 710 774.8 705 770 700C765.2 695 761.2 690 758.8 685C756.2 680 754.8 674.6 755 670C755.2 665.4 757.1 661.5 760 657.5C762.9 653.5 766.7 649.6 772.5 646.2C778.3 642.9 787.9 639.2 795 637.5C802.1 635.8 807.5 635.8 815 635.8C822.5 635.8 830.8 636.6 840 637.5C849.2 638.4 861.7 640.6 870 641C878.3 641.4 886.7 644.3 890 640C893.3 635.7 889.7 621.2 890 615C890.3 608.8 891.1 608.3 892 602.5C892.9 596.7 894.3 585.9 895.5 580C896.7 574.1 901.2 568.5 899 567C896.8 565.5 887.8 571.4 882.5 571.2C877.2 571.1 872.5 569 867.5 566.2C862.5 563.5 856.9 559.4 852.5 555C848.1 550.6 843.5 545 841.2 540C839 535 838.6 531.2 839.2 525C839.9 518.8 841.5 510.4 845 502.5C848.5 494.6 854.2 486.2 860 477.5C865.8 468.8 873.3 458.8 880 450C886.7 441.2 893.3 432.5 900 425C906.7 417.5 914.7 410.8 920 405C925.3 399.2 929.8 393.7 932 390C934.2 386.3 934.6 386.8 933 383C931.4 379.2 927.2 372.6 922.5 367.5C917.8 362.4 911.2 357.1 905 352.5C898.8 347.9 892.1 344.2 885 340C877.9 335.8 868.5 331.7 862.5 327.5C856.5 323.3 852.3 319.6 848.8 315C845.2 310.4 842.6 305 841.2 300C839.9 295 839.7 290 840.8 285C841.8 280 843.9 274.4 847.5 270C851.1 265.6 856.2 261.5 862.5 258.8C868.8 256 877.4 255.2 885 253.8C892.6 252.3 903 251.9 908 250C913 248.1 913.7 247.1 915 242.5C916.3 237.9 915.1 230 915.8 222.5C916.4 215 916.8 204.8 918.8 197.5C920.7 190.2 923.5 183.3 927.5 178.8C931.5 174.2 937.1 170.6 942.5 170Z" fill="#00ad00"></path>
<g clip-path="url(#fc)" id="shade"><path d="M942.5 170C947.9 169.4 954.6 171.7 960 175C965.4 178.3 970 184.8 975 190C980 195.2 986.2 202.7 990 206C993.8 209.3 992.9 209.3 997.5 210C1002.1 210.7 1012.5 211.7 1017.5 210C1022.5 208.3 1023.3 204 1027.5 200C1031.7 196 1037.9 189.4 1042.5 186C1047.1 182.6 1051.7 180.7 1055 179.5C1058.3 178.3 1059.2 178 1062.5 178.8C1065.8 179.5 1071.2 180.6 1075 183.8C1078.8 186.9 1082.1 191.9 1085 197.5C1087.9 203.1 1090.7 210 1092.5 217.5C1094.3 225 1094.3 235.8 1096 242.5C1097.7 249.2 1098.9 253.8 1102.5 257.5C1106.1 261.2 1111.2 262.5 1117.5 265C1123.8 267.5 1133.8 269.6 1140 272.5C1146.2 275.4 1151.2 278.6 1155 282.5C1158.8 286.4 1161.2 291.4 1162.5 296C1163.8 300.6 1163.6 305.2 1162.5 310C1161.4 314.8 1159.8 320.2 1156 325C1152.2 329.8 1146.4 334.6 1140 338.8C1133.6 342.9 1125 346 1117.5 350C1110 354 1102.1 357.9 1095 362.5C1087.9 367.1 1080 373.2 1075 377.5C1070 381.8 1067 385.1 1065 388C1063 390.9 1061.3 391.3 1063 395C1064.7 398.7 1070.1 403.8 1075 410C1079.9 416.2 1086.7 424.2 1092.5 432.5C1098.3 440.8 1104.2 450.4 1110 460C1115.8 469.6 1122.5 481.2 1127.5 490C1132.5 498.8 1136.5 505.4 1140 512.5C1143.5 519.6 1147.1 526.2 1148.8 532.5C1150.4 538.8 1150.6 544.2 1150 550C1149.4 555.8 1147.5 562.5 1145 567.5C1142.5 572.5 1139 576.8 1135 580C1131 583.2 1123.3 582.4 1121 587C1118.7 591.6 1120.8 599.8 1121.2 607.5C1121.7 615.2 1123.3 625.2 1123.8 633C1124.2 640.8 1121.3 650 1124 654C1126.7 658 1134 655.8 1140 657C1146 658.2 1153.3 659.3 1160 661.2C1166.7 663.2 1173.8 665.8 1180 668.8C1186.2 671.7 1192.5 675 1197.5 678.8C1202.5 682.5 1206.7 686.9 1210 691.2C1213.3 695.6 1216 700.6 1217.5 705C1219 709.4 1219.7 712.9 1219.2 717.5C1218.8 722.1 1217.4 727.5 1215 732.5C1212.6 737.5 1210 742.5 1205 747.5C1200 752.5 1192.5 757.5 1185 762.5C1177.5 767.5 1167.9 772.9 1160 777.5C1152.1 782.1 1144.2 786.9 1137.5 790C1130.8 793.1 1127.1 794.8 1120 796.2C1112.9 797.7 1104.6 798.3 1095 798.8C1085.4 799.2 1074.2 799.4 1062.5 798.8C1050.8 798.1 1035.4 796.3 1025 795C1014.6 793.7 1010 792 1000 791C990 790 979.2 789.3 965 788.8C950.8 788.2 930.8 787.9 915 787.5C899.2 787.1 880 787.1 870 786.2C860 785.4 859.2 784.4 855 782.5C850.8 780.6 847.1 778.3 845 775C842.9 771.7 842.1 766.5 842.5 762.5C842.9 758.5 849.2 754.6 847.5 751.2C845.8 747.9 838.8 746 832.5 742.5C826.2 739 817.5 734.6 810 730C802.5 725.4 794.2 720 787.5 715C780.8 710 774.8 705 770 700C765.2 695 761.2 690 758.8 685C756.2 680 754.8 674.6 755 670C755.2 665.4 757.1 661.5 760 657.5C762.9 653.5 766.7 649.6 772.5 646.2C778.3 642.9 787.9 639.2 795 637.5C802.1 635.8 807.5 635.8 815 635.8C822.5 635.8 830.8 636.6 840 637.5C849.2 638.4 861.7 640.6 870 641C878.3 641.4 886.7 644.3 890 640C893.3 635.7 889.7 621.2 890 615C890.3 608.8 891.1 608.3 892 602.5C892.9 596.7 894.3 585.9 895.5 580C896.7 574.1 901.2 568.5 899 567C896.8 565.5 887.8 571.4 882.5 571.2C877.2 571.1 872.5 569 867.5 566.2C862.5 563.5 856.9 559.4 852.5 555C848.1 550.6 843.5 545 841.2 540C839 535 838.6 531.2 839.2 525C839.9 518.8 841.5 510.4 845 502.5C848.5 494.6 854.2 486.2 860 477.5C865.8 468.8 873.3 458.8 880 450C886.7 441.2 893.3 432.5 900 425C906.7 417.5 914.7 410.8 920 405C925.3 399.2 929.8 393.7 932 390C934.2 386.3 934.6 386.8 933 383C931.4 379.2 927.2 372.6 922.5 367.5C917.8 362.4 911.2 357.1 905 352.5C898.8 347.9 892.1 344.2 885 340C877.9 335.8 868.5 331.7 862.5 327.5C856.5 323.3 852.3 319.6 848.8 315C845.2 310.4 842.6 305 841.2 300C839.9 295 839.7 290 840.8 285C841.8 280 843.9 274.4 847.5 270C851.1 265.6 856.2 261.5 862.5 258.8C868.8 256 877.4 255.2 885 253.8C892.6 252.3 903 251.9 908 250C913 248.1 913.7 247.1 915 242.5C916.3 237.9 915.1 230 915.8 222.5C916.4 215 916.8 204.8 918.8 197.5C920.7 190.2 923.5 183.3 927.5 178.8C931.5 174.2 937.1 170.6 942.5 170Z" fill="none" stroke="#008f00" stroke-width="9" stroke-opacity=".55" filter="url(#b3)"></path><ellipse cx="1000" cy="262" rx="42" ry="62" fill="#2fd02f" fill-opacity=".32" filter="url(#b6)"></ellipse><ellipse cx="885" cy="292" rx="30" ry="24" fill="#22c822" fill-opacity=".35" filter="url(#b6)"></ellipse><ellipse cx="1120" cy="300" rx="30" ry="22" fill="#22c822" fill-opacity=".25" filter="url(#b6)"></ellipse><path d="M920 233.8C913.6 230.4 919.8 219.6 921.2 212.5C922.7 205.4 926 196.2 928.8 191.2C931.5 186.3 934.6 182.6 937.5 183C940.4 183.4 943.3 188.6 946.2 193.8C949.2 198.9 952.8 207.3 955 213.8C957.2 220.2 965.3 229.2 959.5 232.5C953.7 235.8 926.4 237.1 920 233.8Z" fill="#009600" fill-opacity=".55" filter="url(#b2)"></path><path d="M1037.5 238.8C1030.1 233.9 1042.1 226 1045 218.8C1047.9 211.5 1051.9 201.5 1055 195C1058.1 188.5 1060.2 178.3 1063.8 180C1067.3 181.7 1072.5 196.5 1076.2 205C1080 213.5 1084 224.1 1086.2 231.2C1088.5 238.4 1097.6 246.8 1089.5 248C1081.4 249.2 1044.9 243.6 1037.5 238.8Z" fill="#009600" fill-opacity=".5" filter="url(#b2)"></path><path d="M920 235C923.3 234.7 933.4 233.4 940 233C946.6 232.6 956.2 232.6 959.5 232.5" fill="none" stroke="#007e00" stroke-width="1.6" stroke-opacity=".8" stroke-dasharray="5 2"></path><path d="M1037.5 238.8C1041.7 239.6 1053.8 242 1062.5 243.8C1071.2 245.5 1085.4 248.1 1090 249" fill="none" stroke="#007e00" stroke-width="1.6" stroke-opacity=".8" stroke-dasharray="5 2"></path><path d="M857.5 282.5C858.8 285.4 860 293.8 865 300C870 306.2 879.6 314.6 887.5 320C895.4 325.4 903.3 332.4 912.5 332.5C921.7 332.6 934.6 324 942.5 320.5C950.4 317 953.8 312.4 960 311.8C966.2 311.1 972.5 313.6 980 316.8C987.5 319.9 995 326.1 1005 330.5C1015 334.9 1029.6 340.7 1040 343C1050.4 345.3 1058.8 344.9 1067.5 344.2C1076.2 343.6 1085 341 1092.5 339C1100 337 1106.7 336.4 1112.5 332.5C1118.3 328.6 1124.2 319.9 1127.5 315.5C1130.8 311.1 1131.7 307.8 1132.5 306.2" fill="none" stroke="#008600" stroke-width="7" stroke-opacity=".55" filter="url(#b3)"></path><path d="M857.5 282.5C858.8 285.4 860 293.8 865 300C870 306.2 879.6 314.6 887.5 320C895.4 325.4 903.3 332.4 912.5 332.5C921.7 332.6 934.6 324 942.5 320.5C950.4 317 953.8 312.4 960 311.8C966.2 311.1 972.5 313.6 980 316.8C987.5 319.9 995 326.1 1005 330.5C1015 334.9 1029.6 340.7 1040 343C1050.4 345.3 1058.8 344.9 1067.5 344.2C1076.2 343.6 1085 341 1092.5 339C1100 337 1106.7 336.4 1112.5 332.5C1118.3 328.6 1124.2 319.9 1127.5 315.5C1130.8 311.1 1131.7 307.8 1132.5 306.2" fill="none" stroke="#007c00" stroke-width="2" stroke-opacity=".45" filter="url(#b2)"></path><path d="M920 340C916.7 334.2 945.8 320.4 960 320C974.2 319.6 989.2 332.5 1005 337.5C1020.8 342.5 1050.8 345 1055 350C1059.2 355 1042.5 366.7 1030 367.5C1017.5 368.3 998.3 359.6 980 355C961.7 350.4 923.3 345.8 920 340Z" fill="#1fc41f" fill-opacity=".3" filter="url(#b3)"></path><path d="M935.5 183.2C935.8 183.5 937.9 182.6 937 185C936.1 187.4 932.2 192.5 930 197.5C927.8 202.5 925.1 209.4 923.8 215C922.4 220.6 922.3 228.5 922 231.2" fill="none" stroke="#e9f7e9" stroke-width="1.1"></path><path d="M919 224.5C919.2 225.9 919.8 231.6 920 233" fill="none" stroke="#e9f7e9" stroke-width="1.1"></path><path d="M1063 179C1062.8 180.4 1063.5 183.4 1062 187.5C1060.5 191.6 1056.6 198.5 1053.8 203.8C1050.9 209 1046.5 216.5 1045 219" fill="none" stroke="#e9f7e9" stroke-width="1.1"></path><path d="M917 246.2C915 248.1 910.3 253.5 905 257.5C899.7 261.5 891.2 265.8 885 270C878.8 274.2 870.4 280.8 867.5 283" fill="none" stroke="#e9f7e9" stroke-width="1.1"></path><path d="M855.5 280.5C856 281.1 858.2 283.4 858.8 284" fill="none" stroke="#e9f7e9" stroke-width="1.1"></path><path d="M1131.2 306.2C1130.4 307.9 1128.5 313.1 1126.2 316.2C1124 319.4 1120.2 321.9 1117.5 325C1114.8 328.1 1111.2 333.3 1110 335" fill="none" stroke="#e9f7e9" stroke-width="1.1"></path><path d="M1040 345.5C1040.4 344.9 1042.1 342.6 1042.5 342" fill="none" stroke="#e9f7e9" stroke-width="1.1"></path><path d="M983.8 348.8C983.1 351.9 981.5 361.8 980 367.5C978.5 373.2 975.8 380.4 975 383" fill="none" stroke="#e9f7e9" stroke-width="1.1"></path><path d="M1022 397C1022.5 396.6 1024.5 394.9 1025 394.5" fill="none" stroke="#e9f7e9" stroke-width="1.1"></path><path d="M852.5 522.5C857.9 518.8 873.8 507.9 885 500C896.2 492.1 910.8 481.2 920 475C929.2 468.8 934.2 469.2 940 462.5C945.8 455.8 950 445.4 955 435C960 424.6 967.5 405.8 970 400" fill="none" stroke="#008a00" stroke-width="5" stroke-opacity=".5" filter="url(#b2)"></path><path d="M1026.2 477.5C1031.9 481 1046.9 492.9 1060 498.8C1073.1 504.6 1091.2 508.5 1105 512.5C1118.8 516.5 1136.2 520.8 1142.5 522.5" fill="none" stroke="#008a00" stroke-width="5" stroke-opacity=".5" filter="url(#b2)"></path><path d="M997.5 400C996.2 403.3 992.3 411.7 990 420C987.7 428.3 985.4 440.4 983.8 450C982.1 459.6 979.8 472 980 477.5C980.2 483 984.2 482.1 985 483" fill="none" stroke="#008a00" stroke-width="4" stroke-opacity=".6" filter="url(#b2)"></path><path d="M985 483C988.3 487.5 995.4 498.8 1005 510C1014.6 521.2 1030 539.2 1042.5 550C1055 560.8 1067.9 568.8 1080 575C1092.1 581.2 1109.2 585 1115 587" fill="none" stroke="#008a00" stroke-width="4" stroke-opacity=".45" filter="url(#b2)"></path><path d="M985 481.2C982.5 483.8 976.7 489.8 970 496.2C963.3 502.7 953.3 511.8 945 520C936.7 528.2 927.5 537.9 920 545.5C912.5 553.1 903.3 562.2 900 565.5" fill="none" stroke="#008a00" stroke-width="4" stroke-opacity=".45" filter="url(#b2)"></path><path d="M862.5 530C870.4 525 894.6 510.8 910 500C925.4 489.2 944.6 478.3 955 465C965.4 451.7 969.6 427.5 972.5 420" fill="none" stroke="#25cc25" stroke-width="14" stroke-opacity=".28" filter="url(#b6)"></path><path d="M1005 420C1006.7 427.5 1006.7 448.3 1015 465C1023.3 481.7 1038.8 504.2 1055 520C1071.2 535.8 1102.9 553.3 1112.5 560" fill="none" stroke="#25cc25" stroke-width="14" stroke-opacity=".25" filter="url(#b6)"></path><path d="M946.2 518.8C941.9 523.5 927.5 539.6 920 547.5C912.5 555.4 905.3 559.6 901.2 566.2C897.2 572.9 896.9 580.2 895.5 587.5C894.1 594.8 893.8 602.4 893 610C892.2 617.6 890.9 629.2 890.5 633" fill="none" stroke="#e9f7e9" stroke-width="1.2"></path><path d="M1115.5 586.5C1116.1 586.2 1118.4 584.8 1119 584.5" fill="none" stroke="#e9f7e9" stroke-width="1.1"></path><path d="M995 404.5C996.9 404.5 1004.4 404.3 1006.2 404.2" fill="none" stroke="#e9f7e9" stroke-width="1"></path><path d="M894.5 590C894.7 595 894.6 610 895.5 620C896.4 630 899.2 645 900 650" fill="none" stroke="#e9f7e9" stroke-width="1.2"></path><path d="M907.5 672.5C911.2 675.2 921.2 683.5 930 688.8C938.8 694 950 699.4 960 703.8C970 708.1 985 713.1 990 715" fill="none" stroke="#e9f7e9" stroke-width="1.1"></path><path d="M900 650C902.5 654.6 908.3 670 915 677.5C921.7 685 929.6 689.2 940 695C950.4 700.8 967.5 708.5 977.5 712.5C987.5 716.5 990.4 717.8 1000 718.8C1009.6 719.7 1026.2 721.1 1035 718C1043.8 714.9 1043.3 707.6 1052.5 700C1061.7 692.4 1078.3 680.8 1090 672.5C1101.7 664.2 1117.1 653.8 1122.5 650" fill="none" stroke="#008a00" stroke-width="5" stroke-opacity=".55" filter="url(#b2)"></path><path d="M767.5 652.5C764.6 646.9 784.6 640.8 797.5 638.8C810.4 636.7 829.6 639.2 845 640C860.4 640.8 878.3 637.5 890 643.8C901.7 650 902.5 666.5 915 677.5C927.5 688.5 965 705 965 710C965 715 932.5 711.7 915 707.5C897.5 703.3 876.7 690.8 860 685C843.3 679.2 830.4 677.9 815 672.5C799.6 667.1 770.4 658.1 767.5 652.5Z" fill="#2ad02a" fill-opacity=".3" filter="url(#b3)"></path><path d="M1052.5 700C1060.8 692.1 1078.3 680.4 1090 672.5C1101.7 664.6 1110 654.2 1122.5 652.5C1135 650.8 1152.2 658.3 1165 662.5C1177.8 666.7 1196.5 675.4 1199 677.5C1201.5 679.6 1189.8 674.6 1180 675C1170.2 675.4 1155 677.1 1140 680C1125 682.9 1106.7 685.8 1090 692.5C1073.3 699.2 1046.2 718.8 1040 720C1033.8 721.2 1044.2 707.9 1052.5 700Z" fill="#2ad02a" fill-opacity=".3" filter="url(#b3)"></path><path d="M1035 720C1044.2 715 1070.4 697.3 1090 690C1109.6 682.7 1137.5 679.1 1152.5 676.2C1167.5 673.4 1175.4 673.5 1180 673" fill="none" stroke="#008a00" stroke-width="4" stroke-opacity=".5" filter="url(#b2)"></path><path d="M1140 678C1143.8 677.4 1155.8 675.4 1162.5 674.5C1169.2 673.6 1177.1 673 1180 672.8" fill="none" stroke="#e9f7e9" stroke-width="1"></path><path d="M815 636C820 636.3 834.2 637.1 845 638C855.8 638.9 874.2 640.7 880 641.2" fill="none" stroke="#e9f7e9" stroke-width="1"></path><path d="M852.5 710C853.8 709.2 853.8 704.7 860 705.5C866.2 706.3 880.8 711.5 890 715C899.2 718.5 906.7 722.5 915 726.2C923.3 730 935.8 735.6 940 737.5" fill="none" stroke="#008a00" stroke-width="4" stroke-opacity=".5" filter="url(#b2)"></path><path d="M853.8 715C855.6 717.5 863.5 725 865 730C866.5 735 865.4 741.2 862.5 745C859.6 748.8 850 751.2 847.5 752.5" fill="none" stroke="#008a00" stroke-width="4" stroke-opacity=".4" filter="url(#b2)"></path><path d="M860 705.5C861.2 705.7 866.2 706.3 867.5 706.5" fill="none" stroke="#e9f7e9" stroke-width="1"></path><path d="M851.2 753.8C852.9 752.7 859.6 748.5 861.2 747.5" fill="none" stroke="#e9f7e9" stroke-width="1"></path><path d="M845 775C856.7 777.1 886.7 784.4 915 787.5C943.3 790.6 983.8 792.1 1015 793.8C1046.2 795.4 1076.7 800.6 1102.5 797.5C1128.3 794.4 1151.2 784.6 1170 775C1188.8 765.4 1207.5 745.8 1215 740" fill="none" stroke="#009200" stroke-width="12" stroke-opacity=".18" filter="url(#b6)"></path><path d="M900 566 L890 640 C896 650 905 668 915 678 C925 688 960 706 978 712 C990 716 1020 720 1035 718 C1045 714 1075 682 1090 672 L1124 650 L1124 588 C1100 584 1060 565 1040 550 C1020 532 995 498 985 482 C970 495 925 540 900 566Z" fill="url(#tg)"></path><ellipse cx="1130" cy="330" rx="40" ry="22" fill="#007a00" fill-opacity=".25" filter="url(#b6)"></ellipse></g>
</svg><div id="ptxt" style="position:absolute;left:0;top:0;transform-origin:0 0;transform:matrix3d(-0.15157739,0.081247826,0,-7.1272179e-05,-0.33918526,-0.020955961,0,2.0077409e-05,0,0,1,0,295.71494,502.48037,0,1);font:bold 100px/100px 'Liberation Sans',sans-serif;white-space:nowrap;color:#cdcdcd;letter-spacing:2px;-webkit-text-stroke:5px #cdcdcd;filter:blur(1.2px)">Bambu Textured PEI Plate</div></div>
<!-- collapse btn -->
<div class="abs" style="left:420px;top:40px;width:20px;height:19px;background:#fdfdfd"></div>
<svg class="ic" style="left:423px;top:44px" width="14" height="10" viewBox="0 0 14 10" fill="none" stroke="#262e30" stroke-width="1.25"><path d="M4 1.500 L1 5 L4 8.500 M10 1.500 L13 5 L10 8.500"></path><path d="M7 0.500 V9.500" stroke="#7d8283"></path></svg>
<!-- thumbnail panel -->
<div class="abs" style="left:421px;top:64px;width:127px;height:137px;background:#dedede;border-radius:3px"></div>
<div class="abs" style="left:427.5px;top:71px;width:111px;height:111.5px;background:#dcdcdc;border:2px solid #2e8df2;border-radius:4px"></div><div class="abs" style="left:432.5px;top:76.5px;width:101px;height:101px;background:#d3d3d3"></div>
<span class="t" style="left:442.5px;top:87px;font-size:15px;color:#ececec;font-weight:bold">1</span>
<svg class="ic" style="left:464px;top:100px" width="46" height="60" viewBox="464 100 46 60"><path d="M477.7 109.1C478.7 108 480.6 105.9 482.1 105C483.5 104.2 485.3 103.6 486.4 103.8C487.6 104.1 488 106.1 489.1 106.4C490.1 106.8 491.6 105.7 492.6 106.1C493.5 106.5 494.5 107.6 494.8 109.1C495.1 110.6 494.8 113.2 494.3 115.2C493.8 117.1 492.4 119.4 491.7 120.8C491 122.2 489.5 123 489.9 123.6C490.4 124.2 493.4 123.6 494.3 124.3C495.2 124.9 495.7 126.3 495.5 127.4C495.4 128.5 492.9 130.4 493.4 130.9C494 131.4 496.9 130.4 498.7 130.6C500.4 130.7 502.8 131 503.9 131.8C505 132.6 505.6 133.8 505.3 135.3C505 136.8 503.6 138.9 502.2 140.5C500.8 142.1 499 143.5 496.9 144.9C494.9 146.4 492 147.5 489.9 149.3C487.9 151 486.2 154.1 484.7 155.4C483.2 156.7 482.2 157.3 481.2 157.2C480.2 157 479.7 154.8 478.6 154.5C477.4 154.2 475.5 155.8 474.2 155.4C473 155 471.5 153.4 471.1 151.9C470.6 150.5 471.9 148.4 471.6 146.7C471.2 144.9 469.3 143.5 469 141.4C468.6 139.4 469 136.5 469.5 134.4C469.9 132.4 470.6 130.8 471.6 129.2C472.5 127.6 474.9 126 475.1 124.8C475.2 123.6 473.2 123.2 472.5 122.2C471.7 121.2 470.6 120 470.7 118.7C470.9 117.4 472.5 115.5 473.3 114.3C474.2 113.1 475.2 112.6 476 111.7C476.7 110.8 476.7 110.2 477.7 109.1Z" fill="#10c810"></path><path d="M472.5 127.4C474.1 125.4 477.1 125.7 479.5 125.7C481.8 125.7 484.6 126 486.4 127.4C488.3 128.9 490.2 131.9 490.8 134.4C491.4 136.9 491.5 140.4 489.9 142.3C488.3 144.2 484.1 145.4 481.2 145.8C478.3 146.2 474.4 146.2 472.5 144.9C470.5 143.6 469.5 140.8 469.5 137.9C469.5 135 470.8 129.5 472.5 127.4Z" fill="#06a506"></path><path d="M490.8 133.5C492.6 131.2 496.4 130.9 498.7 130.9C501 130.9 504.2 131.9 504.8 133.5C505.4 135.2 503.8 138.5 502.2 140.5C500.6 142.6 497.8 143.9 495.2 145.8C492.6 147.7 488.5 150.3 486.4 151.9C484.4 153.5 483.8 155.4 482.9 155.4C482.1 155.4 480.3 153.7 481.2 151.9C482.1 150.2 486.6 148 488.2 144.9C489.8 141.9 489.1 135.9 490.8 133.5Z" fill="#12d412" fill-opacity=".8"></path><path d="M472.5 122.2C473.3 122.5 475.7 123.9 477.7 123.9C479.7 123.9 482.5 123.3 484.7 122.2C486.9 121 489.8 117.8 490.8 116.9" fill="none" stroke="#069a06" stroke-width=".8"></path></svg>
<!-- view cube -->
<svg class="ic" style="left:420px;top:890px" width="120" height="82" viewBox="420 890 120 82">
<path d="M420 955.2 H443.5 V972 H420Z" fill="#f1f1f1"></path>
<path d="M447.200 912.700 L461.400 897.400 L523.500 902.900 L510.400 917.600 Z" fill="#d8d8d8"></path>
<path d="M447.200 912.700 L510.400 917.600 L510.400 972 L447.200 972Z" fill="#cdcdcd" fill-opacity=".93"></path>
<path d="M510.400 917.600 L523.500 902.900 L523.500 962 L510.400 972Z" fill="#c6c6c6"></path>
<g opacity=".6"><path d="M447.500 971 L462 957" stroke="#9fd49f" stroke-width="2.400"></path><path d="M456.500 956 L467.500 953 L462.500 962.500Z" fill="#9fd49f"></path></g>
<path d="M451.500 908 L514.500 913 M456.500 902.500 L519 908 M461.500 914 L475 899 M488 916 L500 901 M510.400 934 L523.500 920 M510.400 953 L523.500 940" stroke="#9c9c9c" stroke-width=".6" stroke-dasharray="2.5 1.5" fill="none"></path>
<path d="M445.300 972 V920" stroke="#8b8bd9" stroke-width="3.400"></path><path d="M439.200 922 L445.200 911 L451.300 922Z" fill="#8b8bd9"></path>
<text x="441" y="903" font-family="Liberation Sans, sans-serif" font-size="11.500" font-weight="bold" fill="#8b8bd9">z</text>
<text x="460.800" y="953.300" font-family="Liberation Sans, sans-serif" font-size="12.800" fill="#6c6c6c" transform="rotate(4 460.800 953.300)" textLength="29.500" lengthAdjust="spacingAndGlyphs">Front</text>
<text x="474" y="911" font-family="Liberation Sans, sans-serif" font-size="8" fill="#555" transform="translate(473 911.500) rotate(5) skewX(-42) scale(1.200 .5) translate(-473 -911.500)">Top</text>
</svg>
<!-- camera circle -->
<svg class="ic" style="left:556px;top:950px" width="38" height="22" viewBox="556 950 38 22"><circle cx="574.700" cy="972.200" r="18" fill="#ededed" fill-opacity=".93"></circle><g transform="translate(.7 2.600)"><path d="M566 965 V961.500 Q566 960 567.500 960 H570 M578 960 H580.500 Q582 960 582 961.500 V965" fill="none" stroke="#555" stroke-width="1.300"></path><path d="M574 964 L579 966.500 V972 M574 964 L569 966.500 V972 M569 966.500 L574 969 L579 966.500 M574 969 V972" fill="none" stroke="#555" stroke-width="1.200"></path></g></svg>
<div class="abs" style="left:516px;top:967px;width:19px;height:8px;background:#f2f2f2;border-radius:5px 5px 0 0"></div>
<!-- bottom slider -->
<div class="abs" style="left:725px;top:958px;width:840px;height:30px;background:#fff;border-radius:8px"></div>
<div class="abs" style="left:730px;top:964px;width:823px;height:20px;background:#00ae42;border-radius:4px 0 0 4px"></div>
<div class="abs" style="left:1541px;top:958px;width:24px;height:24px;border-radius:12px;background:#fff"></div>
<div class="abs" style="left:1544px;top:961px;width:18px;height:18px;border-radius:9px;background:#00ae42"></div>
<div class="abs" style="left:1573px;top:960px;width:24px;height:20px;background:#fff;border-radius:2px"></div>
<svg class="ic" style="left:1567px;top:964px" width="7" height="8" viewBox="0 0 7 8"><path d="M7 0 L0 5 L7 8Z" fill="#fff"></path></svg>
<span class="t" style="left:1577px;top:962px;font-size:13px;color:#00ae42">11</span>
<!-- right slider labels -->
<div class="abs" style="left:1813px;top:139px;width:30px;height:32px;background:#fff;border-radius:2px"></div>
<span class="t" style="left:1821px;top:141px;font-size:12px;color:#00ae42">15</span>
<span class="t" style="left:1817px;top:156px;font-size:12px;color:#00ae42">125</span>
<div class="abs" style="left:1824px;top:871px;width:20px;height:34px;background:#fff;border-radius:2px"></div>
<span class="t" style="left:1832px;top:888px;font-size:12px;color:#00ae42">0</span>
<!-- Slicing result -->
<div id="sr"><div class="abs" style="left:0;top:1px;width:459px;height:366px">
<div class="abs" style="left:0;top:-1px;width:459px;height:2px;background:#2d2d2d"></div>
<div class="abs" style="left:0;top:0;width:459px;height:30px;background:#2d2d2d"></div>
<span class="t" style="left: 12px; top: 8px; transform-origin: 0px 50%; transform: scaleX(0.949);"><b>Slicing Result</b></span>
<svg class="ic" style="left:441px;top:9px" width="14" height="12" viewBox="0 0 14 12" fill="none" stroke="#fff" stroke-width="1.2"><path d="M1.5 6 L7 1.500 L12.500 6 M1.500 10.500 L7 6 L12.500 10.500"></path></svg>
<span class="t" style="left: 12px; top: 35px; transform-origin: 0px 50%; transform: scaleX(0.949);"><b>Color Scheme</b></span>
<div class="abs" style="left:104px;top:34px;width:198px;height:21px;background:#2d2d2d;border-radius:3px"></div>
<svg class="ic" style="left:110px;top:43px" width="10" height="6" viewBox="0 0 10 6" fill="none" stroke="#fff" stroke-width="1.2"><path d="M1 1 L5 4.200 L9 1"></path></svg>
<span class="t" style="left: 129px; top: 38px; transform-origin: 0px 50%; transform: scaleX(1.001);">Filament</span>
<span class="t" style="left: 12px; top: 60px; transform-origin: 0px 50%; transform: scaleX(0.984);"><b>Filament</b></span>
<span class="t" style="left: 229px; top: 60px; transform-origin: 0px 50%; transform: scaleX(0.99);"><b>Model</b></span>
<div class="sep" style="top:78px"></div>
<div class="sq" style="top:85px;background:#00ff00"></div>
<span class="t" style="left:30px;top:83px">1</span>
<span class="t" style="left: 229px; top: 83px; transform-origin: 0px 50%; transform: scaleX(0.979);">21.63 m</span>
<span class="t" style="left: 289px; top: 83px; transform-origin: 0px 50%; transform: scaleX(0.991);">68.68 g</span>
<span class="t" style="left: 12px; top: 104px; transform-origin: 0px 50%; transform: scaleX(1.001);">Filament change times:</span><span class="t" style="left:155px;top:104px">0</span>
<span class="t" style="left: 12px; top: 123px; transform-origin: 0px 50%; transform: scaleX(0.962);">Cost:</span><span class="t" style="left: 50px; top: 123px; transform-origin: 0px 50%; transform: scaleX(0.96);">2.06</span>
<span class="t" style="left: 12px; top: 151px; transform-origin: 0px 50%; transform: scaleX(0.976);"><b>Time Estimation</b></span>
<div class="sep" style="top:169px"></div>
<span class="t" style="left: 12px; top: 174px; transform-origin: 0px 50%; transform: scaleX(1.005);">Prepare and timelapse time:</span><span class="t" style="left: 181px; top: 174px; transform-origin: 0px 50%; transform: scaleX(0.98);">6m30s + 41m26s</span>
<span class="t" style="left: 12px; top: 193px; transform-origin: 0px 50%; transform: scaleX(1.047);">Model printing time:</span><span class="t" style="left: 181px; top: 193px; transform-origin: 0px 50%; transform: scaleX(1.001);">7h12m</span>
<span class="t" style="left: 12px; top: 212px; transform-origin: 0px 50%; transform: scaleX(1.043);">Total time:</span><span class="t" style="left: 181px; top: 212px; transform-origin: 0px 50%; transform: scaleX(0.984);">8h0m</span>
<span class="t" style="left: 12px; top: 235px; transform-origin: 0px 50%; transform: scaleX(0.986);"><b>Options</b></span>
<span class="t" style="left: 229px; top: 235px; transform-origin: 0px 50%; transform: scaleX(0.962);"><b>Display</b></span>
<div class="sep" style="top:253px"></div>
<div class="sq" style="top:260px;background:#38489b"></div><span class="t" style="left: 30px; top: 258px; transform-origin: 0px 50%; transform: scaleX(0.993);">Travel</span><div class="cb" style="top:258px"></div>
<div class="sq" style="top:281px;background:#d62bd6"></div><span class="t" style="left: 30px; top: 279px; transform-origin: 0px 50%; transform: scaleX(1.012);">Retract</span><div class="cb" style="top:279px"></div>
<div class="sq" style="top:302px;background:#44a9d0"></div><span class="t" style="left: 30px; top: 300px; transform-origin: 0px 50%; transform: scaleX(1.042);">Unretract</span><div class="cb" style="top:300px"></div>
<div class="sq" style="top:323px;background:#ffff00"></div><span class="t" style="left: 30px; top: 321px; transform-origin: 0px 50%; transform: scaleX(1.023);">Wipe</span><div class="cb" style="top:321px"></div>
<div class="sq" style="top:344px;background:#e8e8e8"></div><span class="t" style="left: 30px; top: 342px; transform-origin: 0px 50%; transform: scaleX(0.939);">Seams</span><div class="cb" style="top:342px"></div>
<svg class="ic" style="left:236px;top:345px" width="11" height="9" viewBox="0 0 11 9" fill="none" stroke="#00ae42" stroke-width="1.6"><path d="M1 4.500 L4 7.500 L10 1"></path></svg>
</div></div>
<!-- warning -->
<div class="abs" style="left:1419px;top:865px;width:375px;height:75px;background:#f5991a;border-radius:4px"></div>
<div class="abs" style="left:1425px;top:888px;width:30px;height:30px;border-radius:15px;background:#fff"></div>
<div class="abs" style="left:1438.5px;top:894px;width:3px;height:11px;background:#f5991a;border-radius:1px"></div>
<div class="abs" style="left:1438.5px;top:908px;width:3px;height:3px;background:#f5991a;border-radius:1px"></div>
<div class="t" style="left:1466px;top:872px;font-size:13px;line-height:15px;color:#fff8ec">Warning:<br>It seems object Frog_03.stl has floating regions.<br>Please re-orient the object or enable support<br>generation. <span style="color:#7c4a0c;text-decoration:underline">Jump to [Frog_03.stl]</span></div>
<svg class="ic" style="left:1776px;top:898px" width="10" height="10" viewBox="0 0 10 10" stroke="#fff" stroke-width="1.4"><path d="M1 1 L9 9 M9 1 L1 9"></path></svg>

</body></html>
